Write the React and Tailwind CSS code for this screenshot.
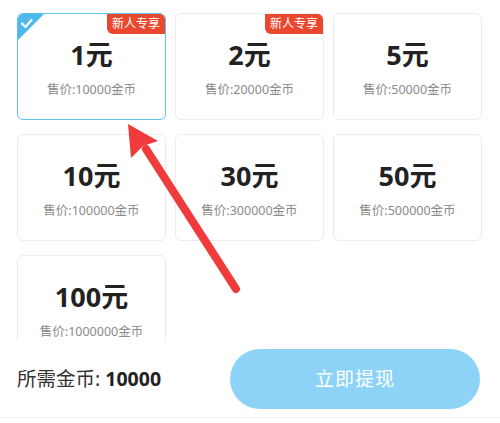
import React from 'react';

const items = [
  { v: '1元', p: '售价:10000金币', tag: true, active: true },
  { v: '2元', p: '售价:20000金币', tag: true },
  { v: '5元', p: '售价:50000金币' },
  { v: '10元', p: '售价:100000金币' },
  { v: '30元', p: '售价:300000金币' },
  { v: '50元', p: '售价:500000金币' },
  { v: '100元', p: '售价:1000000金币' },
];

function Card({ item }) {
  return (
    <div
      className={
        'relative h-[107px] rounded-[6px] overflow-hidden flex flex-col items-center bg-white ' +
        (item.active ? 'border-[1.5px] border-[#62c3ec]' : 'border border-[#ececec]')
      }
    >
      {item.active && (
        <div className="absolute left-0 top-0 w-[26px] h-[26px]">
          <svg width="26" height="26" viewBox="0 0 26 26">
            <path d="M0 0H26L0 26Z" fill="#4fb8ea" />
            <path d="M4 9.5L7.5 13L13.5 6" stroke="#fff" strokeWidth="2.2" fill="none" strokeLinecap="round" strokeLinejoin="round" />
          </svg>
        </div>
      )}
      {item.tag && (
        <div className="absolute right-0 top-0 h-[20px] px-[5px] bg-[#e9482f] text-white text-[12px] leading-[20px] rounded-bl-[6px] rounded-tr-[5px]">
          新人专享
        </div>
      )}
      <div className="mt-[26px] text-[27px] leading-[30px] font-bold text-[#222]">{item.v}</div>
      <div className="mt-[12px] text-[12.5px] leading-[15px] text-[#8a8a8a]">{item.p}</div>
    </div>
  );
}

export default function App() {
  return (
    <div
      className="relative w-[500px] h-[423px] bg-white overflow-hidden"
      style={{ fontFamily: '"Noto Sans", "Noto Sans CJK SC", sans-serif' }}
    >
      <div className="h-[341px] overflow-hidden px-[17px] pt-[13px]">
        <div className="grid grid-cols-[149px_149px_149px] gap-x-[9px] gap-y-[14px]">
          {items.map((it) => (
            <Card key={it.v} item={it} />
          ))}
        </div>
      </div>
      <div className="h-[77px] flex items-center justify-between pl-[17px] pr-[20px] border-b border-[#eeeeee]">
        <div className="text-[19.5px] text-[#333]">
          所需金币: <span className="font-bold text-[#222]">10000</span>
        </div>
        <button className="w-[250px] h-[60px] rounded-full bg-[#8dd3f8] text-white text-[19px] tracking-[1px]">
          立即提现
        </button>
      </div>
      <svg className="absolute left-0 top-0 pointer-events-none" width="500" height="423" viewBox="0 0 500 423">
        <path d="M236 289L146 149" stroke="#ef3b3b" strokeWidth="8" strokeLinecap="round" />
        <path d="M128 124L158 141L143 146L131 158Z" fill="#ef3b3b" />
      </svg>
    </div>
  );
}
